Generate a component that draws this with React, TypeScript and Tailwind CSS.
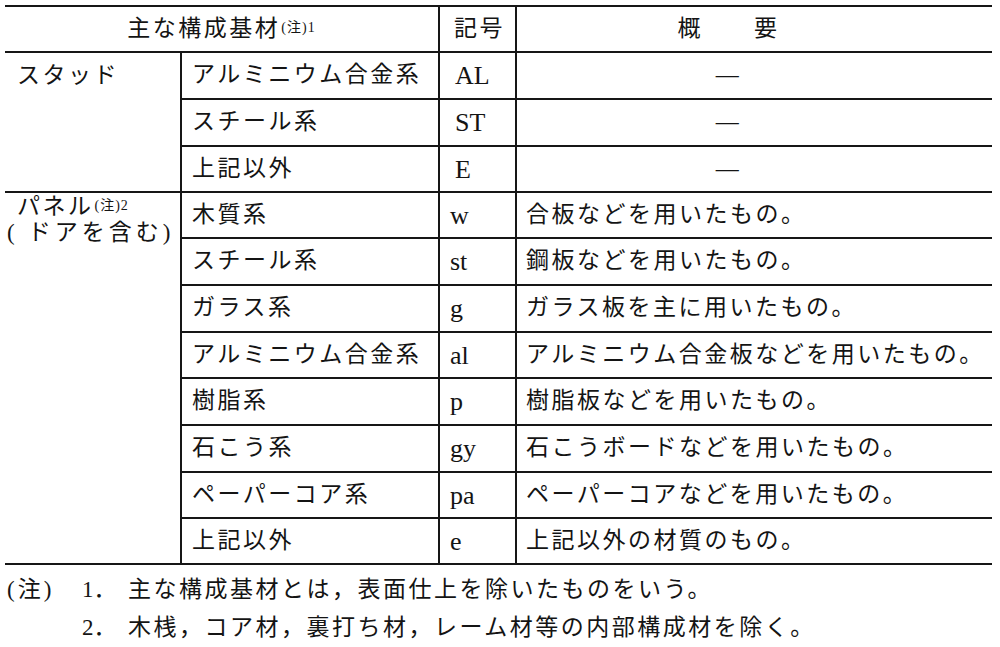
const serif = { fontFamily: "'Liberation Serif', 'Noto Sans CJK JP', serif" };

type Row = { name: string; code: string; note: string; upper?: boolean };

const studs: Row[] = [
  { name: 'アルミニウム合金系', code: 'AL', note: '—', upper: true },
  { name: 'スチール系', code: 'ST', note: '—', upper: true },
  { name: '上記以外', code: 'E', note: '—', upper: true },
];

const panels: Row[] = [
  { name: '木質系', code: 'w', note: '合板などを用いたもの。' },
  { name: 'スチール系', code: 'st', note: '鋼板などを用いたもの。' },
  { name: 'ガラス系', code: 'g', note: 'ガラス板を主に用いたもの。' },
  { name: 'アルミニウム合金系', code: 'al', note: 'アルミニウム合金板などを用いたもの。' },
  { name: '樹脂系', code: 'p', note: '樹脂板などを用いたもの。' },
  { name: '石こう系', code: 'gy', note: '石こうボードなどを用いたもの。' },
  { name: 'ペーパーコア系', code: 'pa', note: 'ペーパーコアなどを用いたもの。' },
  { name: '上記以外', code: 'e', note: '上記以外の材質のもの。' },
];

function Note({ n }: { n: string }) {
  return <sup className="text-[14px] tracking-[1px] relative top-[-4px] ml-[1px]">(注){n}</sup>;
}

function Cells({ row }: { row: Row }) {
  const dash = row.note === '—';
  return (
    <>
      <div className="flex items-center border-b-2 border-l-2 border-[#161616] pl-[10px] whitespace-nowrap">
        {row.name}
      </div>
      <div
        className={`flex items-center border-b-2 border-l-2 border-[#161616] text-[26px] tracking-normal ${
          row.upper ? 'pl-[15px]' : 'pl-[10px]'
        }`}
      >
        {row.code}
      </div>
      <div
        className={`flex items-center border-b-2 border-l-2 border-[#161616] whitespace-nowrap ${
          dash ? 'justify-center pr-[52px]' : 'pl-[9px]'
        }`}
      >
        {row.note}
      </div>
    </>
  );
}

export default function App() {
  return (
    <div className="w-[1000px] h-[647px] bg-white text-[#141414] overflow-hidden" style={serif}>
      <div className="pt-[5px] pl-[5px]">
        <div className="w-[987px] border-t-2 border-[#161616] grid grid-cols-[175px_258px_77px_477px] grid-rows-[46px_47px_47px_46px_46px_47px_47px_46px_47px_47px_46px_46px] text-[23px] tracking-[2.5px]">
          {/* header */}
          <div className="col-span-2 flex items-center justify-center border-b-2 border-[#161616]">
            <span>
              主な構成基材
              <Note n="1" />
            </span>
          </div>
          <div className="flex items-center border-b-2 border-l-2 border-[#161616] pl-[14px]">記号</div>
          <div className="flex items-center justify-center border-b-2 border-l-2 border-[#161616] pr-[52px]">
            概　　要
          </div>

          {/* studs */}
          <div className="row-span-3 border-b-2 border-[#161616] pl-[12px] pt-[9px] leading-[27px]">スタッド</div>
          {studs.map((r) => (
            <Cells key={r.code} row={r} />
          ))}

          {/* panels */}
          <div className="row-span-8 border-b-2 border-[#161616] pl-[12px] pt-[1px] leading-[26px]">
            <div>
              パネル
              <Note n="2" />
            </div>
            <div className="ml-[-10px] flex whitespace-nowrap">
              <span className="tracking-normal">(</span>
              <span className="ml-[13px] tracking-[4px]">ドアを含む</span>
              <span className="tracking-normal">)</span>
            </div>
          </div>
          {panels.map((r) => (
            <Cells key={r.code} row={r} />
          ))}
        </div>
      </div>

      {/* notes */}
      <div className="mt-[6px] pl-[7px] text-[23px] leading-[38px] tracking-[2.5px]">
        <div className="flex whitespace-nowrap">
          <span className="w-[75px] flex tracking-normal">
            <span>(</span>
            <span className="mx-[3px]">注</span>
            <span>)</span>
          </span>
          <span className="w-[46px] tracking-normal">1．</span>
          <span>主な構成基材とは，表面仕上を除いたものをいう。</span>
        </div>
        <div className="flex whitespace-nowrap">
          <span className="w-[75px]" />
          <span className="w-[46px] tracking-normal">2．</span>
          <span>木桟，コア材，裏打ち材，レーム材等の内部構成材を除く。</span>
        </div>
      </div>
    </div>
  );
}
